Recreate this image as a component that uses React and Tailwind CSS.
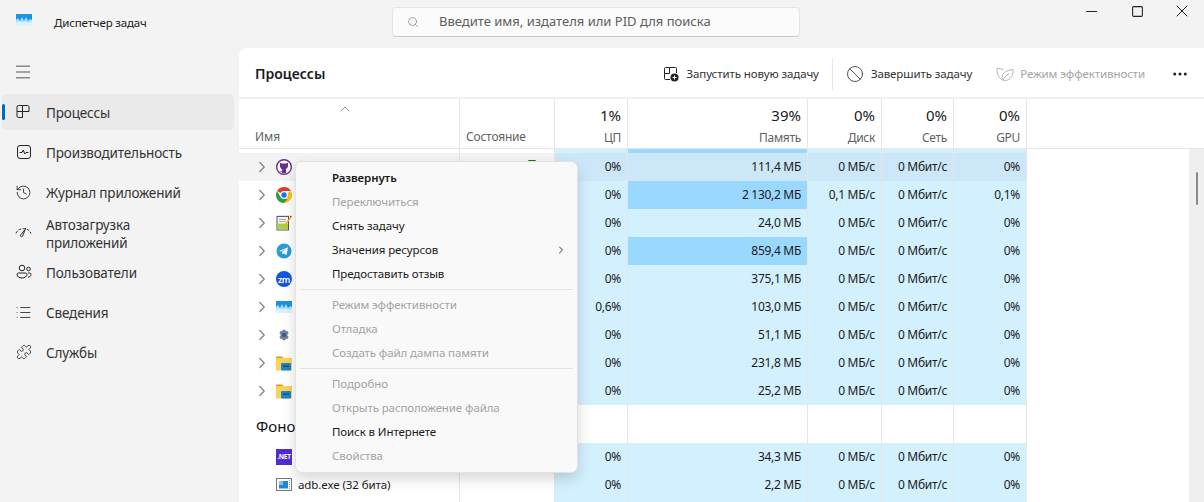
import React from 'react';
import { Search, Minus, Square, X, ChevronRight, ChevronUp, Menu, History, Ban, Ellipsis, List, Puzzle } from 'lucide-react';

const FONT = "font-['Noto_Sans','Open_Sans',sans-serif]";
// Noto шире Segoe UI, поэтому мелкий текст чуть ужат
const SMALL = 'text-[11.5px] tracking-[-0.1px]';
const NUM = 'text-[12px] tracking-[-0.3px]';

// ---- значки ----
function AppLogo({ className }) {
  return (
    <svg viewBox="0 0 16 12" className={className}>
      <rect width="16" height="12" fill="#1a93e2" />
      <path d="M0 12V6l2-2 2 3 2-4 2 4 2-4 2 4 2-2 2 1v6z" fill="#a9e0fa" />
      <path d="M0 12V8.500l3-1 3 1 3-1 3 1 4-1V12z" fill="#dcf3fd" />
    </svg>
  );
}

function ProcessesIcon() {
  return (
    <svg viewBox="0 0 16 16" className="w-[16px] h-[16px]" fill="none" stroke="#222" strokeWidth="1">
      <path d="M2 7.500V3a1.500 1.500 0 0 1 1.500-1.500h4v6h-5.500M7.500 1.500h5a1.500 1.500 0 0 1 1.500 1.500v4.500H7.500M2 7.500v4.500a1.500 1.500 0 0 0 1.500 1.500h4v-6" />
    </svg>
  );
}

function PerfIcon() {
  return (
    <svg viewBox="0 0 16 16" className="w-[16px] h-[16px]" fill="none" stroke="#222" strokeWidth="1">
      <rect x="1.500" y="1.500" width="13" height="13" rx="2.500" />
      <path d="M3.500 8.500h2.500l1.200-2.500 1.600 4 1.200-1.500h2.500" />
    </svg>
  );
}

function StartupIcon() {
  return (
    <svg viewBox="0 0 18 16" className="w-[18px] h-[16px]" fill="none" stroke="#222" strokeWidth="1">
      <path d="M1 9.500C2.500 6 5.500 4.500 9 4.500s6.500 1.500 8 5" strokeDasharray="3 1.500" />
      <path d="M11.500 3.500 8 12.500a1.300 1.300 0 0 1-2.300-1L10 6" />
    </svg>
  );
}

function UsersIcon() {
  return (
    <svg viewBox="0 0 16 16" className="w-[16px] h-[16px]" fill="none" stroke="#222" strokeWidth="1">
      <circle cx="6" cy="4" r="2.800" />
      <circle cx="12.500" cy="5" r="1.800" />
      <path d="M1 10.500a1.500 1.500 0 0 1 1.500-1.500h7a1.500 1.500 0 0 1 1.500 1.500c0 2-2.200 3.500-5 3.500s-5-1.500-5-3.500zM12 9h1.500a1.500 1.500 0 0 1 1.500 1.500c0 1.500-1.200 2.500-3 2.800" />
    </svg>
  );
}

function NewTaskIcon() {
  return (
    <svg viewBox="0 0 16 16" className="w-[16px] h-[16px]" fill="none" stroke="#222" strokeWidth="1">
      <path d="M1.500 7.500V2.500a1 1 0 0 1 1-1h4v6zM6.500 1.500h6a1 1 0 0 1 1 1V7M1.500 7.500v5a1 1 0 0 0 1 1H7" />
      <circle cx="11.500" cy="11.500" r="4" fill="#222" stroke="none" />
      <path d="M11.500 9.500v4M9.500 11.500h4" stroke="#fff" />
    </svg>
  );
}

function LeafIcon() {
  return (
    <svg viewBox="0 0 18 16" className="w-[18px] h-[16px]" fill="none" stroke="#b4b4b4" strokeWidth="1">
      <path d="M6 13.500C2.500 12 1 8 1 2.500c3 0 5 .5 6.500 1.500" />
      <path d="M7 14.500C5 10 6 5 17 3.500c.5 6-2 11-8.500 11-1 0-1.500 0-1.500 0zM7 14.500c1-3 3-5 6-7" />
    </svg>
  );
}

function GithubIcon() {
  return (
    <svg viewBox="0 0 16 16" className="w-[16px] h-[16px]">
      <circle cx="8" cy="8" r="7.300" fill="#fff" stroke="#6a2c91" strokeWidth="1.400" />
      <path d="M4 3.800 5.800 4.500h4.400L12 3.800v3c0 2-1.300 3-2.500 3.200.5.400.5 1 .5 1.500V14H6v-1.300c-1 .2-1.800 0-2.500-1 .8.200 1.500.5 2.500.3 0-.5.200-.8.500-1C5 9.800 4 8.800 4 6.800z" fill="#6a2c91" />
    </svg>
  );
}

function ChromeIcon() {
  return (
    <svg viewBox="0 0 16 16" className="w-[16px] h-[16px]">
      <path d="M8 0a8 8 0 0 1 6.930 4H8a4 4 0 0 0-3.460 2L1.070 4A8 8 0 0 1 8 0z" fill="#e33b2e" />
      <path d="M14.930 4A8 8 0 0 1 8 16l3.460-6a4 4 0 0 0 0-4z" fill="#fbc116" />
      <path d="M1.070 4 4.540 10A4 4 0 0 0 8 12h3.460L8 16A8 8 0 0 1 1.070 4z" fill="#2a9d45" />
      <circle cx="8" cy="8" r="3.400" fill="#fff" />
      <circle cx="8" cy="8" r="2.700" fill="#1a73e8" />
    </svg>
  );
}

function NotepadIcon() {
  return (
    <svg viewBox="0 0 16 16" className="w-[16px] h-[16px]">
      <rect x="1" y="1.500" width="11.500" height="13.500" fill="#f7f7ef" stroke="#555" />
      <path d="M1.500 8.500h10.500V14.500H1.500z" fill="#a5d24a" />
      <path d="M3 4.500h7M3 6.500h7" stroke="#aaa" />
      <path d="M1.500 1h11" stroke="#888" strokeDasharray="1 1" />
      <path d="M14.500 1.500 8 10.500l-1 2 2-1.200L15.500 2.500z" fill="#f2a922" />
      <path d="M14.500.5l1.200 1-.7 1-1.200-1z" fill="#a4262c" />
    </svg>
  );
}

function TelegramIcon() {
  return (
    <svg viewBox="0 0 16 16" className="w-[16px] h-[16px]">
      <circle cx="8" cy="8" r="7.500" fill="#2a9bd8" />
      <path d="M3 8l9-3.800-1.500 8-2.800-2-1.300 1.300-.3-2.500 4-3.500-5 3z" fill="#fff" />
    </svg>
  );
}

function ZoomBadge() {
  return (
    <div className="w-[16px] h-[16px] rounded-full bg-[#1456e0] flex items-center justify-center text-white text-[9px] leading-none font-semibold tracking-[-0.5px]">
      zm
    </div>
  );
}

function GearIcon() {
  return (
    <svg viewBox="0 0 16 16" className="w-[14px] h-[14px]">
      <path d="M6.500 2h3l.5 1.800 1.800-.5 1.500 2.500-1.300 1.400v1.600l1.300 1.400-1.500 2.500-1.800-.5L9.500 14h-3L6 12.200l-1.800.5-1.500-2.500L4 8.800V7.200L2.700 5.800l1.500-2.500 1.800.5z" fill="#76818f" />
      <circle cx="8" cy="8" r="2.400" fill="#1f5fae" />
    </svg>
  );
}

function FolderIcon() {
  return (
    <svg viewBox="0 0 16 16" className="w-[16px] h-[16px]">
      <path d="M0 2.500a1 1 0 0 1 1-1h5l1.500 1.500H0z" fill="#d69a16" />
      <rect y="3" width="16" height="12.500" fill="#fbd258" />
      <rect x="5" y="8" width="10" height="7.500" rx="1" fill="#1c86cf" />
      <rect x="7" y="10.500" width="6" height="1.500" fill="#0b4f86" />
    </svg>
  );
}

function DotNetIcon() {
  return (
    <div className="w-[16px] h-[16px] bg-[#512bd4] flex items-center justify-center text-white text-[6.5px] tracking-[-0.2px] leading-none font-bold">
      .NET
    </div>
  );
}

function ExeIcon() {
  return (
    <svg viewBox="0 0 16 16" className="w-[16px] h-[16px]">
      <rect x=".5" y="1.500" width="15" height="12" fill="#fff" stroke="#777" />
      <rect x="3" y="4" width="9" height="7.500" fill="#1e88d2" />
      <path d="M3 4h4v4H3z" fill="#7cc4ee" />
      <path d="M13.500 3v9" stroke="#999" strokeDasharray="1 1" />
    </svg>
  );
}

// ---- данные ----
const NAV = [
  { label: 'Производительность', icon: <PerfIcon /> },
  { label: 'Журнал приложений', icon: <History className="w-[17px] h-[17px]" strokeWidth={1.200} color="#222" /> },
  { label: 'Автозагрузка приложений', icon: <StartupIcon />, wrap: true },
  { label: 'Пользователи', icon: <UsersIcon /> },
  { label: 'Сведения', icon: <List className="w-[17px] h-[17px]" strokeWidth={1.200} color="#222" /> },
  { label: 'Службы', icon: <Puzzle className="w-[16px] h-[16px]" strokeWidth={1.200} color="#222" /> },
];

const ROWS = [
  { icon: <GithubIcon />, cpu: '0%', mem: '111,4 МБ', disk: '0 МБ/с', net: '0 Мбит/с', gpu: '0%', selected: true },
  { icon: <ChromeIcon />, cpu: '0%', mem: '2 130,2 МБ', disk: '0,1 МБ/с', net: '0 Мбит/с', gpu: '0,1%', hot: true },
  { icon: <NotepadIcon />, cpu: '0%', mem: '24,0 МБ', disk: '0 МБ/с', net: '0 Мбит/с', gpu: '0%' },
  { icon: <TelegramIcon />, cpu: '0%', mem: '859,4 МБ', disk: '0 МБ/с', net: '0 Мбит/с', gpu: '0%', hot: true },
  { icon: <ZoomBadge />, cpu: '0%', mem: '375,1 МБ', disk: '0 МБ/с', net: '0 Мбит/с', gpu: '0%' },
  { icon: <AppLogo className="w-[16px] h-[12px]" />, cpu: '0,6%', mem: '103,0 МБ', disk: '0 МБ/с', net: '0 Мбит/с', gpu: '0%' },
  { icon: <GearIcon />, cpu: '0%', mem: '51,1 МБ', disk: '0 МБ/с', net: '0 Мбит/с', gpu: '0%' },
  { icon: <FolderIcon />, cpu: '0%', mem: '231,8 МБ', disk: '0 МБ/с', net: '0 Мбит/с', gpu: '0%' },
  { icon: <FolderIcon />, cpu: '0%', mem: '25,2 МБ', disk: '0 МБ/с', net: '0 Мбит/с', gpu: '0%' },
];

const MENU = [
  [
    { label: 'Развернуть', bold: true },
    { label: 'Переключиться', off: true },
    { label: 'Снять задачу' },
    { label: 'Значения ресурсов', more: true },
    { label: 'Предоставить отзыв' },
  ],
  [
    { label: 'Режим эффективности', off: true },
    { label: 'Отладка', off: true },
    { label: 'Создать файл дампа памяти', off: true },
  ],
  [
    { label: 'Подробно', off: true },
    { label: 'Открыть расположение файла', off: true },
    { label: 'Поиск в Интернете' },
    { label: 'Свойства', off: true },
  ],
];

// ---- части таблицы ----
function HeadCell({ className, percent, title }) {
  return (
    <div className={`h-full border-r border-[#e6e6e6] pr-[6px] flex flex-col items-end ${className}`}>
      <div className="mt-[6px] text-[15px] leading-[20px] text-[#1a1a1a]">{percent}</div>
      <div className="mt-[5px] text-[12px] tracking-[-0.3px] leading-[16px] text-[#5f5f5f]">{title}</div>
    </div>
  );
}

function Cell({ className, color, children }) {
  return (
    <div className={`h-full border-r border-[#e6e6e6] pr-[6px] flex items-center justify-end text-[#1a1a1a] ${NUM} ${color} ${className}`}>
      {children}
    </div>
  );
}

function ProcessRow({ row }) {
  const base = row.selected ? 'bg-[#cce8f8]' : 'bg-[#d3f0ff]';
  const mem = row.hot ? 'bg-[#9bd8ff]' : base;
  return (
    <div className={`h-[28px] w-fit flex ${row.selected ? 'bg-[#f3f3f3]' : ''}`}>
      <div className="w-[221px] h-full border-r border-[#e6e6e6] pl-[14px] flex items-center shrink-0">
        <ChevronRight className="w-[18px] h-[18px] text-[#808080]" strokeWidth={1.600} />
        <div className="ml-[5px] w-[16px] flex justify-center">{row.icon}</div>
      </div>
      <div className="w-[95px] h-full border-r border-[#e6e6e6] shrink-0">
        {row.selected && <div className="ml-[68px] mt-[7px] w-[8px] h-[12px] rounded-t-[1px] bg-[#107c10]" />}
      </div>
      <Cell className="w-[73px]" color={base}>{row.cpu}</Cell>
      <Cell className="w-[180px]" color={mem}>{row.mem}</Cell>
      <Cell className="w-[74px]" color={base}>{row.disk}</Cell>
      <Cell className="w-[72px]" color={base}>{row.net}</Cell>
      <Cell className="w-[73px]" color={base}>{row.gpu}</Cell>
    </div>
  );
}

function BackgroundRow({ icon, name, cpu, mem, disk, net, gpu }) {
  const base = 'bg-[#d3f0ff]';
  return (
    <div className="h-[28px] w-fit flex">
      <div className="w-[221px] h-full border-r border-[#e6e6e6] pl-[37px] flex items-center shrink-0">
        {icon}
        {name && <span className={`ml-[6px] text-[#1a1a1a] ${SMALL}`}>{name}</span>}
      </div>
      <div className="w-[95px] h-full border-r border-[#e6e6e6] shrink-0" />
      <Cell className="w-[73px]" color={base}>{cpu}</Cell>
      <Cell className="w-[180px]" color={base}>{mem}</Cell>
      <Cell className="w-[74px]" color={base}>{disk}</Cell>
      <Cell className="w-[72px]" color={base}>{net}</Cell>
      <Cell className="w-[73px]" color={base}>{gpu}</Cell>
    </div>
  );
}

function ContextMenu() {
  return (
    <div className="absolute left-[295px] top-[161px] w-[283px] h-[312px] bg-[#f9f9f9] rounded-[7px] border border-[#e2e2e2] shadow-[0_6px_14px_rgba(0,0,0,0.16)] pt-[4px] z-10">
      {MENU.map((group, i) => (
        <div key={i} className={i > 0 ? 'border-t border-[#e4e4e4] mx-[4px] mt-[3px] pt-[3px]' : ''}>
          {group.map((item) => (
            <div
              key={item.label}
              className={`h-[24px] flex items-center justify-between ${SMALL} ${i > 0 ? 'pl-[32px]' : 'pl-[36px]'} pr-[10px] ${item.bold ? 'font-semibold' : ''} ${item.off ? 'text-[#a3a3a3]' : 'text-[#1a1a1a]'}`}
            >
              <span>{item.label}</span>
              {item.more && <ChevronRight className="w-[12px] h-[12px] text-[#2b3a20]" strokeWidth={2} />}
            </div>
          ))}
        </div>
      ))}
    </div>
  );
}

export default function App() {
  return (
    <div className={`relative w-[1204px] h-[502px] overflow-hidden bg-[#f3f3f3] flex flex-col ${FONT}`}>
      {/* заголовок окна */}
      <div className="h-[48px] shrink-0 flex items-start">
        <div className="w-[392px] h-full flex items-center pl-[16px] pb-[2px] shrink-0">
          <AppLogo className="w-[16px] h-[12px] -mt-[6px]" />
          <span className="ml-[22px] text-[11.5px] tracking-[-0.15px] text-[#1a1a1a]">Диспетчер задач</span>
        </div>
        <div className="mt-[7px] w-[408px] h-[30px] bg-[#fbfbfb] border border-[#e5e5e5] border-b-[#c9c9c9] rounded-[4px] flex items-center pl-[14px] text-[13px] text-[#5e5e5e] shrink-0">
          <Search className="w-[12px] h-[12px] text-[#777]" strokeWidth={1.300} />
          <span className="ml-[20px]">Введите имя, издателя или PID для поиска</span>
        </div>
        <div className="ml-auto flex items-center text-[#222] h-[22px]">
          <div className="w-[46px] flex justify-center"><Minus className="w-[17px] h-[17px]" strokeWidth={1.400} /></div>
          <div className="w-[46px] flex justify-center"><Square className="w-[13px] h-[13px]" strokeWidth={2} /></div>
          <div className="w-[44px] flex justify-center"><X className="w-[20px] h-[20px]" strokeWidth={1.200} /></div>
        </div>
      </div>

      <div className="flex-1 flex min-h-0">
        {/* боковая панель */}
        <div className="w-[239px] shrink-0 text-[13.5px] tracking-[-0.15px] text-[#333]">
          <div className="h-[46px] pl-[13px] pt-[2px] flex items-center">
            <Menu className="w-[20px] h-[20px] text-[#333]" strokeWidth={1} />
          </div>
          <div className="relative mx-[2px] mr-[5px] h-[36px] rounded-[5px] bg-[#eaeaea] flex items-center pl-[13px]">
            <div className="absolute left-0 top-[10px] w-[3px] h-[16px] rounded-full bg-[#0067c0]" />
            <ProcessesIcon />
            <span className="ml-[15px] pt-[2px]">Процессы</span>
          </div>
          <div className="mt-[2px]">
            {NAV.map((item) => (
              <div key={item.label} className="h-[40px] pl-[15px] flex items-center">
                <div className="w-[17px] flex justify-center shrink-0">{item.icon}</div>
                <span className={`ml-[14px] ${item.wrap ? 'w-[130px] leading-[18px] pt-[4px]' : 'pt-[2px]'}`}>{item.label}</span>
              </div>
            ))}
          </div>
        </div>

        {/* основная панель */}
        <div className="flex-1 min-w-0 bg-white rounded-tl-[8px] flex flex-col relative">
          <div className={`h-[51px] shrink-0 border-b-2 border-[#f0f0f0] flex items-center pt-[2px] pl-[16px] pr-[15px] ${SMALL}`}>
            <span className="text-[14px] tracking-normal font-semibold text-[#1a1a1a]">Процессы</span>
            <div className="ml-auto flex items-center text-[#333]">
              <NewTaskIcon />
              <span className="ml-[8px]">Запустить новую задачу</span>
              <div className="ml-[13px] mr-[13px] w-px h-[32px] bg-[#e8e8e8]" />
              <Ban className="w-[18px] h-[18px]" strokeWidth={1.100} />
              <span className="ml-[7px]">Завершить задачу</span>
              <div className="ml-[24px]"><LeafIcon /></div>
              <span className="ml-[6px] text-[#a3a3a3]">Режим эффективности</span>
              <Ellipsis className="ml-[26px] w-[18px] h-[18px] text-[#222]" strokeWidth={2} />
            </div>
          </div>

          {/* шапка таблицы */}
          <div className="h-[50px] shrink-0 flex border-b border-[#e6e6e6]">
            <div className="relative w-[221px] h-full border-r border-[#e6e6e6] shrink-0 flex items-end pl-[16px] pb-[2px] text-[12px] text-[#5f5f5f]">
              <ChevronUp className="absolute left-[98px] top-[2px] w-[16px] h-[16px] text-[#777]" strokeWidth={1.200} />
              Имя
            </div>
            <div className="w-[95px] h-full border-r border-[#e6e6e6] shrink-0 flex items-end pl-[6px] pb-[2px] text-[12px] tracking-[-0.2px] text-[#5f5f5f]">Состояние</div>
            <HeadCell className="w-[73px]" percent="1%" title="ЦП" />
            <HeadCell className="w-[180px]" percent="39%" title="Память" />
            <HeadCell className="w-[74px]" percent="0%" title="Диск" />
            <HeadCell className="w-[72px]" percent="0%" title="Сеть" />
            <HeadCell className="w-[73px]" percent="0%" title="GPU" />
          </div>

          {/* строки */}
          <div className="flex-1 min-h-0 overflow-hidden flex">
            <div className="flex-1 min-w-0">
              <div className="h-[4px] flex">
                <div className="w-[221px] border-r border-[#e6e6e6]" />
                <div className="w-[95px] border-r border-[#e6e6e6]" />
                <div className="w-[73px] border-r border-[#e6e6e6] bg-[#d3f0ff]" />
                <div className="w-[180px] border-r border-[#e6e6e6] bg-[#9bd8ff]" />
                <div className="w-[74px] border-r border-[#e6e6e6] bg-[#d3f0ff]" />
                <div className="w-[72px] border-r border-[#e6e6e6] bg-[#d3f0ff]" />
                <div className="w-[73px] border-r border-[#e6e6e6] bg-[#d3f0ff]" />
              </div>
              {ROWS.map((row, i) => <ProcessRow key={i} row={row} />)}
              <div className="h-[38px] flex">
                <div className="w-[221px] h-full border-r border-[#e6e6e6] pl-[17px] pt-[4px] flex items-center text-[15px] text-[#111] shrink-0">Фоновые процессы</div>
                <div className="w-[95px] h-full border-r border-[#e6e6e6] shrink-0" />
                <div className="w-[73px] h-full border-r border-[#e6e6e6] shrink-0" />
                <div className="w-[180px] h-full border-r border-[#e6e6e6] shrink-0" />
                <div className="w-[74px] h-full border-r border-[#e6e6e6] shrink-0" />
                <div className="w-[72px] h-full border-r border-[#e6e6e6] shrink-0" />
                <div className="w-[73px] h-full border-r border-[#e6e6e6] shrink-0" />
              </div>
              <BackgroundRow icon={<DotNetIcon />} cpu="0%" mem="34,3 МБ" disk="0 МБ/с" net="0 Мбит/с" gpu="0%" />
              <BackgroundRow icon={<ExeIcon />} name="adb.exe (32 бита)" cpu="0%" mem="2,2 МБ" disk="0 МБ/с" net="0 Мбит/с" gpu="0%" />
              <BackgroundRow />
            </div>
            {/* полоса прокрутки */}
            <div className="w-[15px] shrink-0 bg-[#efefef] pl-[7px] pt-[23px]">
              <div className="w-[2px] h-[33px] rounded-full bg-[#8a8a8a]" />
            </div>
          </div>
        </div>
      </div>

      <ContextMenu />
    </div>
  );
}
